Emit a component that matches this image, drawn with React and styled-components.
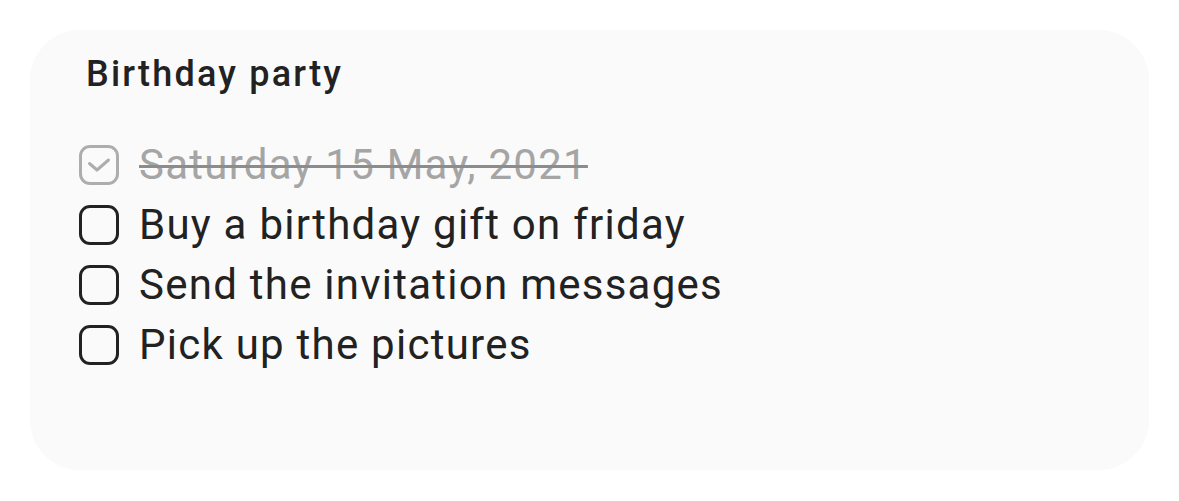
import React from "react";
import styled, { createGlobalStyle } from "styled-components";

const Global = createGlobalStyle`
  html, body { margin: 0; padding: 0; background: #ffffff; }
  body { font-family: Roboto, "Noto Sans", sans-serif; }
`;

const Page = styled.div`
  padding: 30px;
  width: 1179px;
  height: 501px;
  box-sizing: border-box;
`;

const Card = styled.div`
  background: #fafafa;
  border-radius: 50px;
  height: 440px;
  box-sizing: border-box;
  padding: 24px 49px 0 49px;
  display: flex;
  flex-direction: column;
`;

const Title = styled.h2`
  margin: 0 0 41px 7px;
  font-size: 36px;
  line-height: 40px;
  font-weight: 500;
  letter-spacing: 2.2px;
  color: #222222;
`;

const List = styled.ul`
  list-style: none;
  margin: 0;
  padding: 0;
  display: flex;
  flex-direction: column;
`;

const Row = styled.li`
  display: flex;
  align-items: center;
  height: 60px;
  gap: 20px;
`;

const Box = styled.span`
  width: 40px;
  height: 40px;
  box-sizing: border-box;
  border: 3px solid ${(p) => (p.$done ? "#adadad" : "#222222")};
  border-radius: 11px;
  display: flex;
  align-items: center;
  justify-content: center;
  flex: none;
`;

const Label = styled.span`
  font-size: 42px;
  line-height: 60px;
  letter-spacing: 1.25px;
  color: ${(p) => (p.$done ? "#a5a5a5" : "#222222")};
  text-decoration: ${(p) => (p.$done ? "line-through" : "none")};
  text-decoration-color: #8c8c8c;
  text-decoration-thickness: 3px;
  white-space: nowrap;
`;

const items = [
  { text: "Saturday 15 May, 2021", done: true },
  { text: "Buy a birthday gift on friday", done: false },
  { text: "Send the invitation messages", done: false },
  { text: "Pick up the pictures", done: false },
];

export default function App() {
  return (
    <Page>
      <Global />
      <Card>
        <Title>Birthday party</Title>
        <List>
          {items.map((it) => (
            <Row key={it.text}>
              <Box $done={it.done}>
                {it.done && (
                  <svg width="26" height="18" viewBox="0 0 26 18">
                    <path
                      d="M3.5 7.5 L11 14 L22.5 4"
                      fill="none"
                      stroke="#adadad"
                      strokeWidth="3"
                      strokeLinecap="round"
                      strokeLinejoin="round"
                    />
                  </svg>
                )}
              </Box>
              <Label $done={it.done}>{it.text}</Label>
            </Row>
          ))}
        </List>
      </Card>
    </Page>
  );
}
